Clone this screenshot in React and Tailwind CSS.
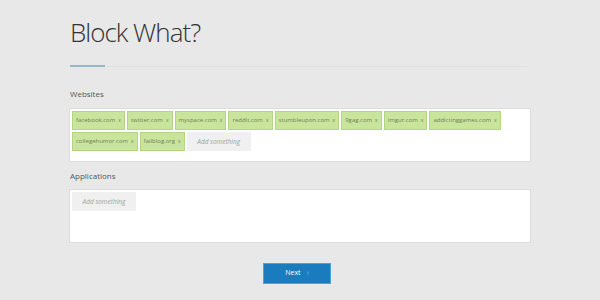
import React from "react";

const sites = [
  "facebook.com",
  "twitter.com",
  "myspace.com",
  "reddit.com",
  "stumbleupon.com",
  "9gag.com",
  "imgur.com",
  "addictinggames.com",
  "collegehumor.com",
  "failblog.org",
];

const Tag = ({ label }) => (
  <div className="flex h-[19px] items-center gap-[3px] border border-[#b3d680] bg-[#c9e49b] px-[3px] text-[6px] text-[#6f7f5e]">
    <span>{label}</span>
    <span className="text-[5px]">x</span>
  </div>
);

const AddBox = () => (
  <div className="flex h-[19px] w-[64px] items-center justify-center bg-[#f0f0f0] text-[6.5px] italic text-[#a0a0a0]">
    Add something
  </div>
);

const App = () => {
  return (
    <div
      className="h-[300px] w-[600px] overflow-hidden bg-[#e8e8e8]"
      style={{ fontFamily: '"Open Sans", sans-serif' }}
    >
      <div className="mx-auto w-[462px] pt-[14px]">
        <h1 className="pl-[1px] text-[26px] font-light leading-[36px] tracking-[-1px] text-[#333]">
          Block What?
        </h1>
        <div className="mt-[15px] flex items-center pl-[1px] pr-[4px]">
          <div className="h-[2px] w-[35px] bg-[#8fb8c8]" />
          <div className="h-[1px] flex-1 bg-[#e0e0e0]" />
        </div>

        <div className="mt-[21px] pl-[1px] text-[8px] leading-[12px] text-[#555]">
          Websites
        </div>
        <div className="mt-[8px] h-[54px] border border-[#dcdcdc] bg-white p-[2px]">
          <div className="flex flex-wrap gap-[2px]">
            {sites.map((s) => (
              <Tag key={s} label={s} />
            ))}
            <AddBox />
          </div>
        </div>

        <div className="mt-[8px] pl-[1px] text-[8px] leading-[12px] text-[#555]">
          Applications
        </div>
        <div className="mt-[7px] h-[54px] border border-[#dcdcdc] bg-white p-[2px]">
          <AddBox />
        </div>

        <div className="mt-[20px] flex justify-center pr-[6px]">
          <button className="flex h-[21px] w-[68px] items-center justify-center gap-[6px] border border-[#4fa2d6] bg-[#1a7cbf] text-[7px] text-white">
            <span>Next</span>
            <span className="text-[7px] text-[#9cc8e6]">›</span>
          </button>
        </div>
      </div>
    </div>
  );
};

export default App;
